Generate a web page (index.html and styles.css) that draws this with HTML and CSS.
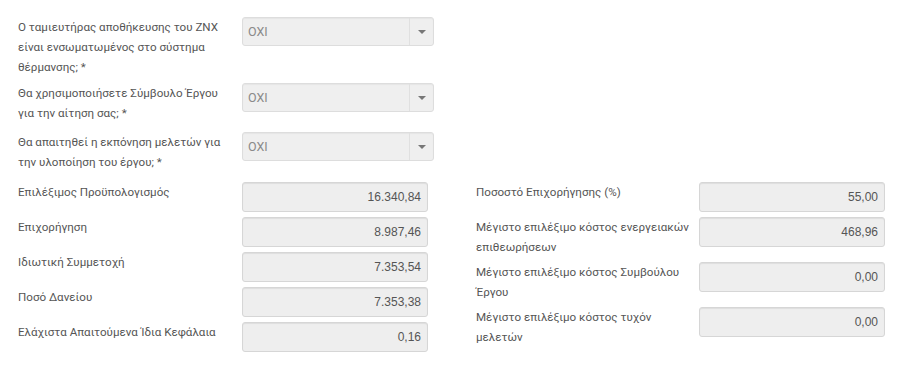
FILE: index.html
```html
<!DOCTYPE html>
<html lang="el">
<head>
<meta charset="utf-8">
<title>Form</title>
<link rel="stylesheet" href="styles.css">
</head>
<body>
<div class="form">
  <div class="row row-sel1">
    <label class="lbl">Ο ταμιευτήρας αποθήκευσης του ZNX είναι ενσωματωμένος στο σύστημα θέρμανσης; *</label>
    <div class="select"><span class="sel-text">OXI</span><span class="sel-btn"><span class="caret"></span></span></div>
  </div>
  <div class="row row-sel2">
    <label class="lbl">Θα χρησιμοποιήσετε Σύμβουλο Έργου για την αίτηση σας; *</label>
    <div class="select"><span class="sel-text">OXI</span><span class="sel-btn"><span class="caret"></span></span></div>
  </div>
  <div class="row row-sel3">
    <label class="lbl">Θα απαιτηθεί η εκπόνηση μελετών για την υλοποίηση του έργου; *</label>
    <div class="select"><span class="sel-text">OXI</span><span class="sel-btn"><span class="caret"></span></span></div>
  </div>
  <div class="cols">
    <div class="col col-left">
      <div class="row"><label class="lbl">Επιλέξιμος Προϋπολογισμός</label><div class="input">16.340,84</div></div>
      <div class="row"><label class="lbl">Επιχορήγηση</label><div class="input">8.987,46</div></div>
      <div class="row"><label class="lbl">Ιδιωτική Συμμετοχή</label><div class="input">7.353,54</div></div>
      <div class="row"><label class="lbl">Ποσό Δανείου</label><div class="input">7.353,38</div></div>
      <div class="row"><label class="lbl">Ελάχιστα Απαιτούμενα Ίδια Κεφάλαια</label><div class="input">0,16</div></div>
    </div>
    <div class="col col-right">
      <div class="row"><label class="lbl">Ποσοστό Επιχορήγησης (%)</label><div class="input">55,00</div></div>
      <div class="row"><label class="lbl">Μέγιστο επιλέξιμο κόστος ενεργειακών επιθεωρήσεων</label><div class="input">468,96</div></div>
      <div class="row"><label class="lbl">Μέγιστο επιλέξιμο κόστος Συμβούλου Έργου</label><div class="input">0,00</div></div>
      <div class="row"><label class="lbl">Μέγιστο επιλέξιμο κόστος τυχόν μελετών</label><div class="input">0,00</div></div>
    </div>
  </div>
</div>
</body>
</html>
```
FILE: styles.css
```css
html, body {
  margin: 0;
  padding: 0;
  background: #fff;
}
body {
  font-family: Roboto, "Liberation Sans", sans-serif;
  font-size: 11.6px;
  color: #555;
}
.form {
  padding: 17px 0 0 18px;
}
.row {
  display: flex;
  align-items: flex-start;
  margin-bottom: 5px;
}
.lbl {
  width: 224px;
  flex: none;
  line-height: 20px;
  box-sizing: border-box;
  padding-right: 16px;
}
.row-sel1 { min-height: 61px; }
.row-sel2 { min-height: 44px; }
.row-sel3 { min-height: 45px; }
.select {
  width: 192px;
  height: 29px;
  box-sizing: border-box;
  border: 1px solid #ddd;
  border-radius: 3px;
  background: #efefef;
  display: flex;
  align-items: center;
  box-shadow: inset 0 1px 1px rgba(0,0,0,0.04);
}
.sel-text {
  flex: 1;
  padding-left: 5px;
  color: #8a8a8a;
  font-size: 12.5px;
}
.sel-btn {
  width: 23px;
  height: 100%;
  border-left: 1px solid #e0e0e0;
  display: flex;
  align-items: center;
  justify-content: center;
}
.caret {
  width: 0;
  height: 0;
  border-left: 4px solid transparent;
  border-right: 4px solid transparent;
  border-top: 4px solid #777;
}
.cols {
  display: flex;
}
.col-left {
  width: 458px;
}
.col-right .lbl {
  width: 223px;
  padding-right: 4px;
}
.input {
  width: 186px;
  height: 30px;
  box-sizing: border-box;
  border: 1px solid #d6d6d6;
  border-radius: 3px;
  background: #eee;
  box-shadow: inset 0 1px 1px rgba(0,0,0,0.07);
  font-family: "Liberation Sans", Arial, sans-serif;
  font-size: 12px;
  color: #555;
  text-align: right;
  line-height: 28px;
  padding-right: 6px;
}
```
